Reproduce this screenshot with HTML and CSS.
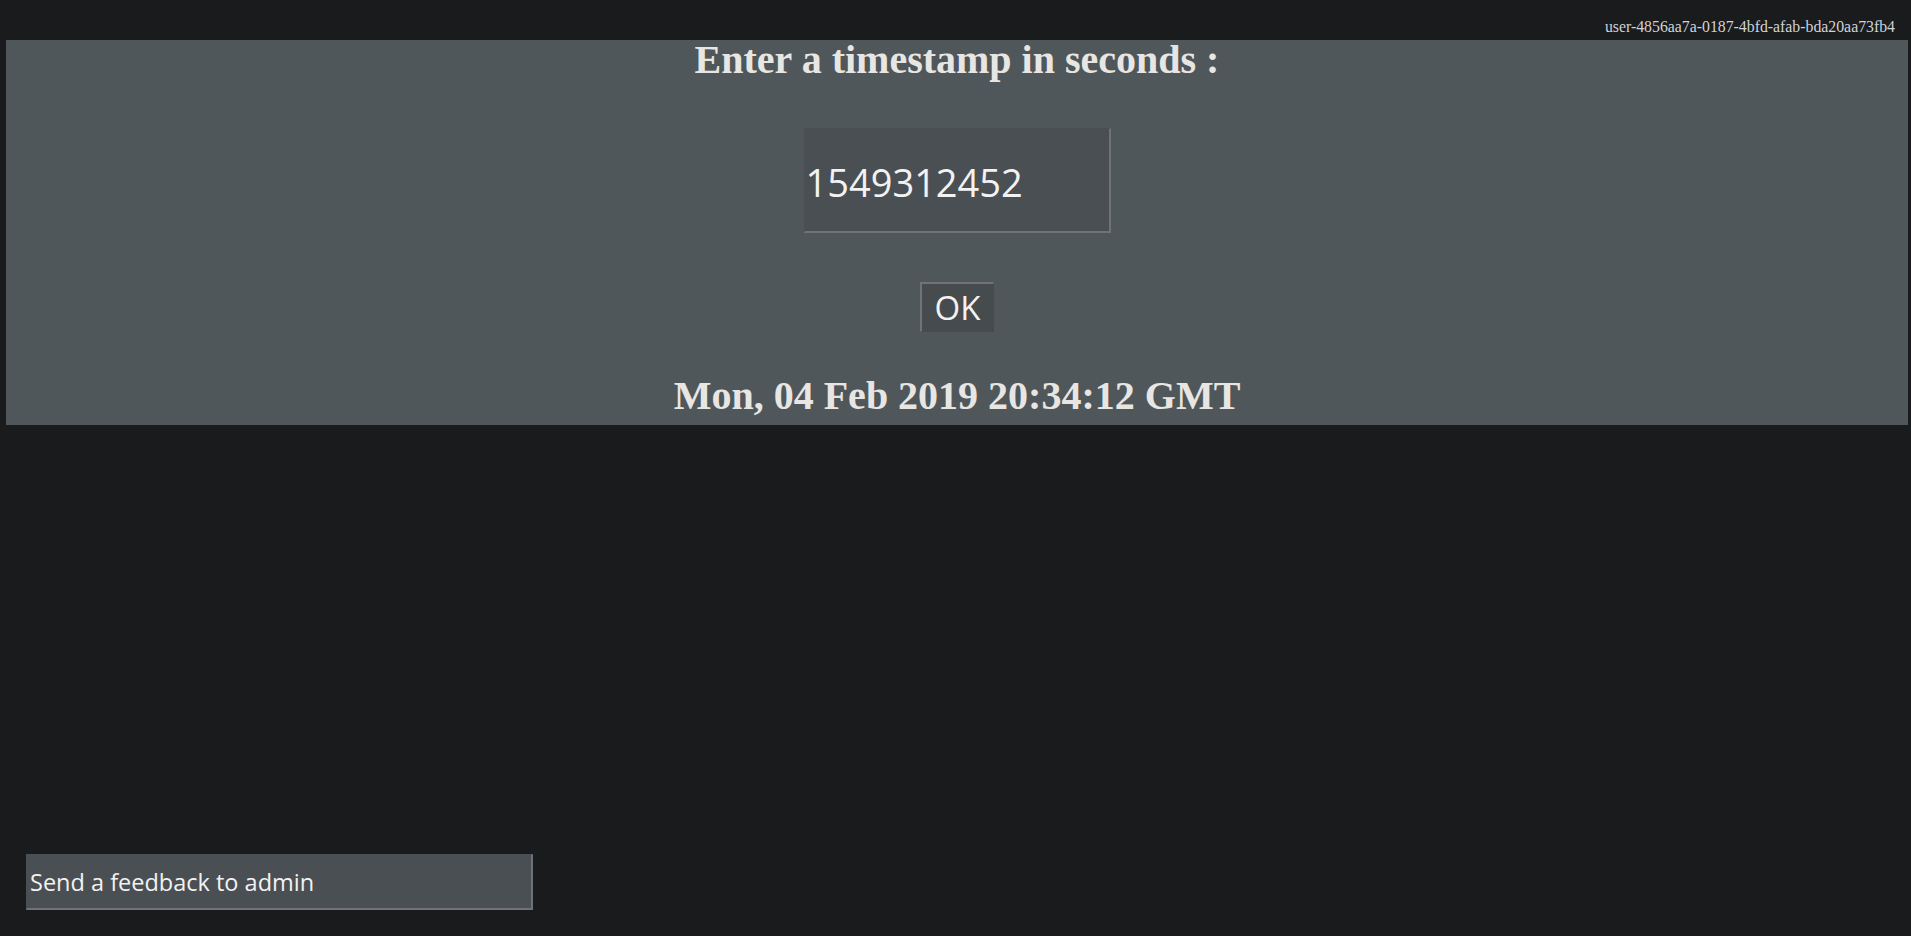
FILE: index.html
```html
<!DOCTYPE html>
<html lang="en">
<head>
<meta charset="utf-8">
<title>Timestamp converter</title>
<link rel="stylesheet" href="styles.css">
</head>
<body>
<div class="page">
  <div class="topbar">user-4856aa7a-0187-4bfd-afab-bda20aa73fb4</div>
  <div class="panel">
    <h1 class="title">Enter a timestamp in seconds :</h1>
    <input class="ts-input" type="text" value="1549312452">
    <button class="ok-btn" type="button">OK</button>
    <h1 class="result">Mon, 04 Feb 2019 20:34:12 GMT</h1>
  </div>
  <div class="feedback">
    <input class="feedback-input" type="text" value="Send a feedback to admin">
  </div>
</div>
</body>
</html>
```

FILE: styles.css
```css
html, body {
  margin: 0;
  padding: 0;
  background: #1a1b1d;
}

.page {
  display: flex;
  flex-direction: column;
  min-height: 100vh;
  box-sizing: border-box;
}

.topbar {
  box-sizing: border-box;
  height: 40px;
  padding: 18px 16px 0 0;
  text-align: right;
  font-family: "Liberation Serif", "Times New Roman", serif;
  font-size: 15.8px;
  line-height: 18px;
  color: #cfd3d8;
}

.panel {
  margin: 0 3px 0 6px;
  background: #50575b;
  display: flex;
  flex-direction: column;
  align-items: center;
  padding-bottom: 9px;
}

.title,
.result {
  margin: 0;
  font-family: "Liberation Serif", "Times New Roman", serif;
  font-weight: bold;
  font-size: 40px;
  line-height: 40px;
  color: #e8e6e3;
  text-align: center;
}

.ts-input {
  margin-top: 48px;
  box-sizing: border-box;
  width: 307px;
  height: 105px;
  padding: 4px 0 0 1px;
  background: #4a4f53;
  border-style: solid;
  border-width: 1px 2px 2px 1px;
  border-color: #4a4f53 #6f7276 #6f7276 #4a4f53;
  font-family: "Open Sans", "Noto Sans", sans-serif;
  font-size: 38px;
  color: #f2f2f2;
  outline: none;
}

.ok-btn {
  margin-top: 49px;
  box-sizing: border-box;
  width: 74px;
  height: 50px;
  padding: 0;
  background: #464b4e;
  border-style: solid;
  border-width: 2px 1px 1px 2px;
  border-color: #6f7276 #464b4e #464b4e #6f7276;
  font-family: "Open Sans", "Noto Sans", sans-serif;
  font-size: 33px;
  line-height: 44px;
  color: #f2f2f2;
}

.result {
  margin-top: 44px;
}

.feedback {
  margin-top: auto;
  padding: 0 0 26px 26px;
}

.feedback-input {
  display: block;
  box-sizing: border-box;
  width: 507px;
  height: 56px;
  padding: 1px 0 0 3px;
  background: #4a4f53;
  border-style: solid;
  border-width: 1px 2px 2px 1px;
  border-color: #4a4f53 #6f7276 #6f7276 #4a4f53;
  font-family: "Open Sans", "Noto Sans", sans-serif;
  font-size: 23.5px;
  color: #f2f2f2;
  outline: none;
}
```
